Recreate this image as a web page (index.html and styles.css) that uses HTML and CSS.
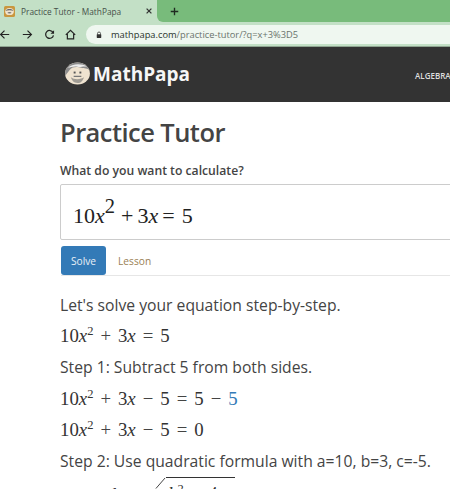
FILE: index.html
```html
<!DOCTYPE html>
<html lang="en">
<head>
<meta charset="utf-8">
<title>Practice Tutor - MathPapa</title>
<link rel="stylesheet" href="styles.css">
</head>
<body>
<div class="tabstrip">
  <div class="tab">
    <svg class="favicon" viewBox="0 0 14 14"><rect width="14" height="14" rx="2" fill="#c9973f"/><ellipse cx="7" cy="7" rx="5.500" ry="4.600" fill="#f1e3cc"/><path d="M2 6c1-3 9-3 10 0-3-1-7-1-10 0z" fill="#6b6b6b"/><ellipse cx="7" cy="8.500" rx="2.500" ry="1" fill="#777"/></svg>
    <span class="tab-title">Practice Tutor - MathPapa</span>
    <svg class="tab-close" viewBox="0 0 10 10"><path d="M2 2l6 6M8 2l-6 6" stroke="#333" stroke-width="1.600" fill="none"/></svg>
  </div>
  <div class="tab-rest">
    <svg class="newtab" viewBox="0 0 12 12"><path d="M6 1v10M1 6h10" stroke="#1f2a20" stroke-width="1.800" fill="none"/></svg>
  </div>
</div>
<div class="toolbar">
  <svg class="nav nav-back" viewBox="0 0 14 14"><path d="M13 7H2M7 2L2 7l5 5" stroke="#222" stroke-width="1.500" fill="none"/></svg>
  <svg class="nav nav-forward" viewBox="0 0 14 14"><path d="M1 7h11M7 2l5 5-5 5" stroke="#222" stroke-width="1.500" fill="none"/></svg>
  <svg class="nav" viewBox="0 0 14 14"><path d="M11.500 4.500A5 5 0 1 0 12 8" stroke="#222" stroke-width="1.600" fill="none"/><path d="M12.800 1.500v4.500H8.300z" fill="#222"/></svg>
  <svg class="nav nav-home" viewBox="0 0 14 14"><path d="M1 7.500L7 1.800l6 5.700M3 6.300V12.500h8V6.300" stroke="#222" stroke-width="1.500" fill="none"/></svg>
  <div class="omnibox">
    <svg class="lock" viewBox="0 0 8 10"><path d="M2 4.500V3a2 2 0 0 1 4 0v1.500" stroke="#333" stroke-width="1" fill="none"/><rect x="1" y="4" width="6" height="5" rx=".6" fill="#333"/></svg>
    <span class="url"><span class="url-host">mathpapa.com</span>/practice-tutor/?q=x+3%3D5</span>
  </div>
</div>
<header class="site-header">
  <div class="logo">
    <svg class="logo-face" viewBox="0 0 26 24"><defs><clipPath id="face"><ellipse cx="13" cy="12" rx="13" ry="11.500"/></clipPath></defs><g clip-path="url(#face)"><rect width="26" height="24" fill="#efe3d0"/><path d="M0 0h26v9c-3-3-6-2-9-3S8 4 5 8 1 13 0 15z" fill="#8d8d8d"/><path d="M3 6c4-4 14-5 20-1-5-1-6 1-10 0S6 6 3 6z" fill="#ececec"/><path d="M6 16c4 3 11 2 14 0-2 4-3 6-7 6s-6-3-7-6z" fill="#a09c94"/><rect x="9" y="10" width="2" height="2" fill="#555"/><rect x="15" y="10" width="2" height="2" fill="#555"/><path d="M9 15h8" stroke="#777" stroke-width="1.200"/></g></svg>
    <span class="logo-text">MathPapa</span>
  </div>
  <span class="menu-item">ALGEBRA</span>
</header>
<main class="content">
  <h1 class="title">Practice Tutor</h1>
  <label class="prompt">What do you want to calculate?</label>
  <div class="math-input">10<i>x</i><sup>2</sup><span class="mi-plus">+</span><span class="mi-three">3</span><i>x</i><span class="mi-eq">=</span><span class="mi-five">5</span></div>
  <div class="tabs">
    <span class="tab-btn active">Solve</span>
    <span class="tab-btn">Lesson</span>
  </div>
  <p class="text first">Let's solve your equation step-by-step.</p>
  <div class="eq eq-first">10<i>x</i><sup>2</sup><span class="op">+</span>3<i>x</i><span class="op">=</span>5</div>
  <p class="text step-one">Step 1: Subtract 5 from both sides.</p>
  <div class="eq">10<i>x</i><sup>2</sup><span class="op">+</span>3<i>x</i><span class="op">−</span>5<span class="op">=</span>5<span class="op">−</span><span class="blue">5</span></div>
  <div class="eq">10<i>x</i><sup>2</sup><span class="op">+</span>3<i>x</i><span class="op">−</span>5<span class="op">=</span>0</div>
  <p class="text">Step 2: Use quadratic formula with a=10, b=3, c=-5.</p>
  <div class="formula">
    <span class="f-top">−<i>b</i> ±</span>
    <svg class="f-slash" viewBox="0 0 12 12"><path d="M11 .5L1 12" stroke="#333" stroke-width="1" fill="none"/></svg>
    <span class="f-root"><i>b</i><sup>2</sup><span class="op">−</span>4<i>ac</i></span>
  </div>
</main>
</body>
</html>
```

FILE: styles.css
```css
* { box-sizing: border-box; }
html, body { margin: 0; height: 489px; overflow: hidden; }
body { background: #fff; font-family: "Open Sans", "Noto Sans", sans-serif; color: #333; width: 450px; }

.tabstrip { height: 23px; background: #c3e0c6; display: flex; }
.tab { width: 157px; height: 23px; display: flex; align-items: center; padding: 0 0 1px 4px; }
.favicon { width: 11px; height: 11px; flex: none; }
.tab-title { font-size: 8.300px; color: #46504a; margin-left: 6px; width: 124px; white-space: nowrap; }
.tab-close { width: 8px; height: 8px; }
.tab-rest { flex: 1; height: 22px; background: #78bb7b; border-radius: 0 0 0 6px; display: flex; align-items: center; }
.newtab { width: 9px; height: 9px; margin-left: 13px; }

.toolbar { height: 24px; background: #c3e0c6; display: flex; align-items: center; border-bottom: 1px solid #8fa591; }
.nav { width: 11px; height: 11px; margin-left: 11px; flex: none; }
.nav-back { margin-left: -1px; }
.nav-forward { margin-left: 12px; }
.nav-home { margin-left: 10px; }
.omnibox { flex: 1; height: 19px; margin-left: 10px; background: #eff7f0; border-radius: 10px 0 0 10px; display: flex; align-items: center; padding-left: 10px; }
.lock { width: 6px; height: 8px; flex: none; }
.url { font-size: 9.300px; color: #6a736c; margin-left: 9px; white-space: nowrap; }
.url-host { color: #29332b; }

.site-header { height: 55px; background: #333; display: flex; align-items: center; padding-left: 64px; position: relative; }
.logo { display: flex; align-items: center; }
.logo-face { width: 27px; height: 23px; margin-top: -3px; }
.logo-text { font-size: 19px; font-weight: 700; color: #f6f6f6; margin-left: 2px; line-height: 1; }
.menu-item { position: absolute; left: 415px; top: 23px; font-size: 8px; font-weight: 600; color: #ddd; white-space: nowrap; }

.content { padding: 0 0 0 60px; width: 520px; }
.title { margin: 0; font-size: 25.500px; font-weight: 600; color: #444; line-height: 36px; padding-top: 12px; height: 49px; letter-spacing: -.55px; }
.prompt { display: block; margin-top: 12px; font-size: 12.200px; font-weight: 600; color: #444; line-height: 16px; }
.math-input { margin-top: 5px; height: 56px; border: 1px solid #ccc; border-radius: 2px; font-family: "Liberation Serif", serif; font-size: 22px; color: #222; padding: 16px 0 0 12px; line-height: 30px; white-space: nowrap; }
.math-input sup { font-size: 20.500px; line-height: 0; vertical-align: 10px; }
.mi-plus { margin-left: 6px; }
.mi-three { margin-left: 4px; }
.mi-eq { margin-left: 4px; }
.mi-five { margin-left: 7px; }
.tabs { margin-top: 6px; height: 30px; border-bottom: 1px solid #e6e6e6; display: flex; margin-left: 1px; }
.tab-btn { font-size: 10.200px; color: #9a7f55; line-height: 30px; height: 29px; padding: 0 12px; }
.tab-btn.active { background: #337ab7; color: #e9f0f6; border-radius: 3px; width: 45px; padding: 0; text-align: center; }
.text { margin: 9px 0 0; font-size: 15.700px; line-height: 20px; color: #444; white-space: nowrap; }
.text.first { margin-top: 19px; }
.eq { font-family: "Liberation Serif", serif; font-size: 18.800px; color: #333; line-height: 22px; margin-top: 11px; white-space: nowrap; height: 22px; }
.eq-first { margin-top: 10px; }
.step-one { margin-top: 10px; }
.eq sup, .f-root sup { font-size: 12.500px; line-height: 0; vertical-align: 7px; }
.eq + .eq { margin-top: 9px; }
.eq + .eq + .text { margin-top: 10px; }
.op { margin: 0 7px; color: #444; }
.blue { color: #337ab7; }
.formula { font-family: "Liberation Serif", serif; font-size: 18.800px; color: #333; display: flex; padding-left: 41px; line-height: 22px; white-space: nowrap; }
.f-top { margin-top: 13px; width: 54px; flex: none; }
.f-slash { width: 11px; height: 12px; margin-top: 6px; flex: none; }
.f-root { margin-top: 6px; border-top: 1px solid #333; width: 69px; height: 28px; padding: 5px 0 0 2px; flex: none; }
```
